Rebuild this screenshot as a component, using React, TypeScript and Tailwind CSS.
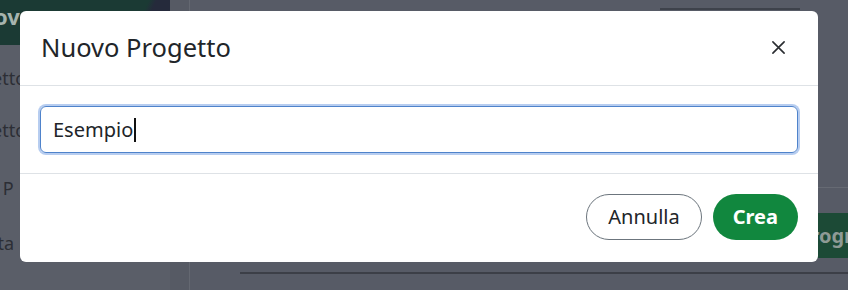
import React from "react";

export default function App() {
  const font = { fontFamily: '"Noto Sans", "Open Sans", sans-serif' };
  return (
    <div className="relative w-[848px] h-[290px] overflow-hidden bg-[#575b66]" style={font}>
      {/* background page (dimmed) */}
      <div className="flex h-full">
        <div className="w-[170px] flex flex-col bg-[#5a5e68]">
          <div className="h-[45px] flex items-center bg-[linear-gradient(115deg,#1b3a34_0%,#1b3a34_78%,#252a3b_82%,#252a3b_100%)]">
            <span className="text-[22px] font-bold text-[#a6b4ae] -ml-[6px] -mt-[12px]">ov</span>
          </div>
          <div className="mt-[21px] h-[24px] leading-[24px] text-[18px] text-[#2c2e35] -ml-[8px] whitespace-nowrap">etto</div>
          <div className="mt-[28px] h-[24px] leading-[24px] text-[18px] text-[#2c2e35] -ml-[8px] whitespace-nowrap">etto</div>
          <div className="mt-[34px] h-[24px] leading-[24px] text-[18px] text-[#2c2e35] -ml-[12px] whitespace-nowrap">a P</div>
          <div className="mt-[31px] h-[24px] leading-[24px] text-[18px] text-[#2c2e35] -ml-[10px] whitespace-nowrap">rta</div>
        </div>
        <div className="w-[20px] bg-[#565a64] border-r border-[#646871]" />
        <div className="flex-1 flex flex-col">
          <div className="h-[10px] flex justify-end pr-[48px]">
            <div className="w-[140px] h-[10px] border-b-2 border-[#3e424b]" />
          </div>
          <div className="h-[178px] border-b border-[#666a73]" />
          <div className="h-[25px]" />
          <div className="flex justify-end">
            <div className="w-[200px] h-[45px] bg-[#1c4a36] flex items-center justify-start pl-[150px] text-[20px] font-bold text-[#8e9a95] overflow-hidden whitespace-nowrap">
              <span>Programma</span>
            </div>
          </div>
        </div>
      </div>
      <div className="absolute left-[240px] right-0 top-[272px] h-[2px] bg-[#3c3f47]" />

      {/* modal */}
      <div className="absolute left-[20px] top-[11px] w-[798px] h-[251px] bg-white rounded-[6px] flex flex-col">
        <div className="h-[75px] flex items-center justify-between pl-[21px] pr-[32px] border-b border-[#dee2e6]">
          <h5 className="text-[25.5px] leading-none text-[#212529] -mt-[1px]">Nuovo Progetto</h5>
          <svg width="15" height="15" viewBox="0 0 16 16" className="-mt-[2px]">
            <path d="M2 2 L14 14 M14 2 L2 14" stroke="#2a2d31" strokeWidth="1.7" strokeLinecap="round" />
          </svg>
        </div>
        <div className="h-[88px] border-b border-[#dee2e6] px-[20px] pt-[20px]">
          <div className="h-[47px] rounded-[6px] border border-[#4f83cb] ring-2 ring-[#b7cdf0] flex items-center pl-[12px] text-[20px] text-[#212529]">
            <span>Esempio</span>
            <span className="inline-block w-[2px] h-[24px] bg-[#111] ml-px" />
          </div>
        </div>
        <div className="flex-1 flex items-center justify-end gap-[11px] pr-[20px] pb-[2px]">
          <button className="h-[46px] px-[21px] rounded-full border border-[#6c757d] text-[20px] text-[#212529] bg-white">
            Annulla
          </button>
          <button className="h-[46px] px-[20px] rounded-full bg-[#11873e] text-[20px] font-bold text-white">
            Crea
          </button>
        </div>
      </div>
    </div>
  );
}
